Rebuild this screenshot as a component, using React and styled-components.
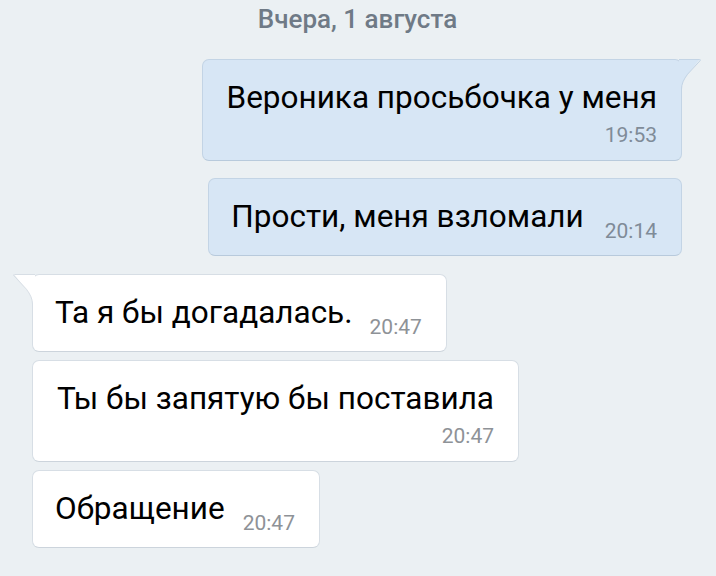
import React from "react";
import styled, { createGlobalStyle } from "styled-components";

const Global = createGlobalStyle`
  html, body {
    margin: 0;
    padding: 0;
    background: #ebf0f3;
  }
  body {
    font-family: Roboto, "Noto Sans", sans-serif;
    -webkit-font-smoothing: antialiased;
  }
`;

const Chat = styled.div`
  width: 716px;
  height: 576px;
  overflow: hidden;
  display: flex;
  flex-direction: column;
  padding: 4px 34px 0 32px;
  box-sizing: border-box;
`;

const DateLabel = styled.div`
  align-self: center;
  font-size: 26px;
  font-weight: 500;
  line-height: 30px;
  color: #6f7a86;
  margin-left: 1px;
  margin-bottom: 25px;
`;

const Row = styled.div`
  display: flex;
  justify-content: ${(p) => (p.out ? "flex-end" : "flex-start")};
  margin-bottom: ${(p) => p.gap || 10}px;
`;

const Bubble = styled.div`
  position: relative;
  box-sizing: border-box;
  border-radius: 7px;
  border: 1px solid ${(p) => (p.out ? "#c3d4e5" : "#d7dee5")};
  border-bottom-color: ${(p) => (p.out ? "#b8cadc" : "#ccd4dc")};
  background: ${(p) => (p.out ? "#d7e6f5" : "#ffffff")};
  padding: ${(p) => (p.stacked ? "17px 24px 14px 24px" : "17px 24px 17px 22px")};
  display: flex;
  flex-direction: ${(p) => (p.stacked ? "column" : "row")};
  align-items: ${(p) => (p.stacked ? "stretch" : "flex-end")};
  gap: ${(p) => (p.stacked ? "0" : `${p.spacing || 18}px`)};
`;

const Text = styled.div`
  font-size: 31.5px;
  line-height: 42px;
  color: #000;
  white-space: nowrap;
`;

const Time = styled.div`
  font-size: 21px;
  line-height: 22px;
  color: ${(p) => (p.out ? "#7f8b98" : "#8e9297")};
  text-align: right;
  white-space: nowrap;
  margin-bottom: ${(p) => (p.stacked ? 0 : -4)}px;
  margin-top: ${(p) => (p.stacked ? 5 : 0)}px;
`;

const TailSvg = styled.svg`
  position: absolute;
  top: -1px;
  ${(p) => (p.out ? "right: -22px;" : "left: -22px; transform: scaleX(-1);")}
  width: 24px;
  height: 30px;
  overflow: visible;
`;

function Tail({ out }) {
  const fill = out ? "#d7e6f5" : "#ffffff";
  const stroke = out ? "#c3d4e5" : "#d7dee5";
  return (
    <TailSvg out={out} viewBox="0 0 24 30">
      <path d="M0 0 H21 L9 15 Q2.5 23 2.5 30 H0 Z" fill={fill} />
      <path
        d="M0 0.5 H20.5 Q22 0.5 21 1.8 L8.6 15.2 Q2.5 23 2.5 30"
        fill="none"
        stroke={stroke}
        strokeWidth="1"
      />
    </TailSvg>
  );
}

function Message({ out, text, time, stacked, tail, gap, spacing }) {
  return (
    <Row out={out} gap={gap}>
      <Bubble out={out} stacked={stacked} spacing={spacing}>
        {tail && <Tail out={out} />}
        <Text>{text}</Text>
        <Time out={out} stacked={stacked}>
          {time}
        </Time>
      </Bubble>
    </Row>
  );
}

export default function App() {
  return (
    <>
      <Global />
      <Chat>
        <DateLabel>Вчера, 1 августа</DateLabel>
        <Message out tail stacked text="Вероника просьбочка у меня" time="19:53" gap={17} />
        <Message out text="Прости, меня взломали" time="20:14" gap={18} spacing={21} />
        <Message tail text="Та я бы догадалась." time="20:47" gap={8} spacing={17} />
        <Message stacked text="Ты бы запятую бы поставила" time="20:47" gap={8} />
        <Message text="Обращение" time="20:47" />
      </Chat>
    </>
  );
}
